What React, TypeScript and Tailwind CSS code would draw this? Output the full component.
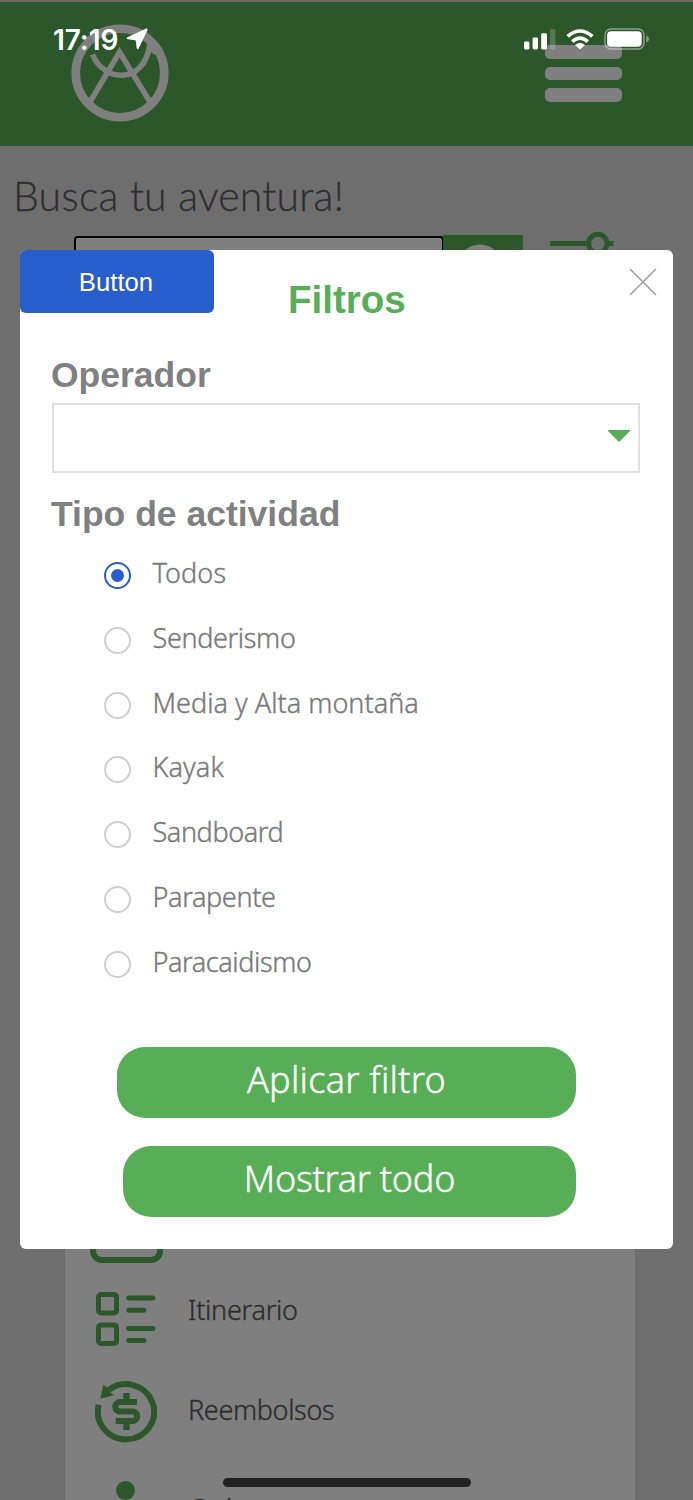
import { useState } from "react";

const ACTIVITIES = [
  { id: "todos", label: "Todos", tracking: "tracking-[0.1px]" },
  { id: "senderismo", label: "Senderismo", tracking: "tracking-[-0.35px]" },
  { id: "montana", label: "Media y Alta montaña", tracking: "tracking-[0.02px]" },
  { id: "kayak", label: "Kayak", tracking: "tracking-[0.1px]" },
  { id: "sandboard", label: "Sandboard", tracking: "tracking-[-0.4px]" },
  { id: "parapente", label: "Parapente", tracking: "tracking-[-0.35px]" },
  { id: "paracaidismo", label: "Paracaidismo", tracking: "tracking-[-0.4px]" },
];

function Logo() {
  return (
    <svg className="h-[98px] w-[98px]" viewBox="0 0 98 98" fill="none" stroke="currentColor">
      <circle cx="49" cy="49" r="44.3" strokeWidth="8.6" />
      <path d="M19 78 L48.5 28 L79 78" strokeWidth="5.5" />
      <path d="M21.5 30.5 C33 59 73 60 78.5 22 L85 29" strokeWidth="5.5" />
    </svg>
  );
}

function SearchIcon() {
  return (
    <svg className="h-[60px] w-[60px]" viewBox="0 0 60 60" fill="none" stroke="currentColor" strokeWidth="7">
      <circle cx="27" cy="25" r="18" />
      <path d="M40 38 L54 53" />
    </svg>
  );
}

function SlidersIcon() {
  return (
    <svg className="h-[60px] w-16" viewBox="0 0 64 60" fill="none" stroke="currentColor" strokeWidth="5">
      <path d="M0 12.5 H38 M57 12.5 H63.5" />
      <circle cx="47.8" cy="12.5" r="9.2" />
      <path d="M0 40 H8 M27 40 H63" />
      <circle cx="17" cy="40" r="9.2" />
    </svg>
  );
}

function ListIcon() {
  return (
    <svg className="h-[54px] w-[62px]" viewBox="0 0 62 54" fill="none" stroke="currentColor" strokeWidth="5">
      <rect x="3.5" y="2.5" width="18" height="18.5" rx="2.5" />
      <rect x="3.5" y="33" width="18" height="18.5" rx="2.5" />
      <path strokeLinecap="round" d="M33.7 6 H58 M33.7 18.2 H49 M33.7 36.5 H58 M33.7 48.6 H49" />
    </svg>
  );
}

function RefundIcon() {
  return (
    <svg className="h-[62px] w-[63px]" viewBox="0 0 63 62" fill="none" stroke="currentColor">
      <path d="M3.8 23.8 A28.1 27.6 0 1 0 14 8.8" strokeWidth="6" />
      <path d="M8.3 3.7 L5.3 17.7 L19 14.3 L15.8 11.5 L13 7Z" fill="currentColor" stroke="none" />
      <path d="M42 21 H25 A4.75 4.75 0 0 0 25 30.5 H37.5 A4.75 4.75 0 0 1 37.5 40 H20.7" strokeWidth="6" />
      <path d="M31.5 12 V21 M31.5 40 V49" strokeWidth="6.4" />
    </svg>
  );
}

function StatusBar() {
  return (
    <div className="absolute inset-x-0 top-0 flex h-[78px] items-center pl-[53px] pr-[44px] text-white">
      <span className="w-[73px] whitespace-nowrap pt-[2px] font-['Inter',sans-serif] text-[28px] font-semibold leading-none tracking-[-0.1px]">
        17:19
      </span>
      <svg className="h-[22px] w-[22px]" viewBox="0 0 22 22" fill="currentColor">
        <path d="M1.6 9.2 L19.6 .8 Q22 0 21.3 2.4 L12.8 20.2 Q11.4 22.3 10.6 19.8 L9.9 13.2 Q9.8 12.3 9 12.2 L2 11.3 Q-.5 10.6 1.6 9.2Z" />
      </svg>
      <svg className="ml-auto h-[21px] w-[32px]" viewBox="0 0 32 21" fill="currentColor">
        <rect x="0" y="12.5" width="5.4" height="8" rx="1.4" />
        <rect x="8.6" y="8.5" width="5.4" height="12" rx="1.4" />
        <rect x="17.2" y="4.3" width="5.8" height="16.2" rx="1.4" />
        <rect x="26" y="0" width="5.4" height="20.5" rx="1.4" opacity=".2" />
      </svg>
      <svg className="ml-[10px] h-[21px] w-[28px]" viewBox="0 0 28 21" fill="none" stroke="currentColor" strokeWidth="3.6">
        <path d="M1.7 7.4 Q14 -3.4 26.3 7.4" />
        <path d="M6.3 12.6 Q14 5.8 21.7 12.6" />
        <path d="M14 20.5 L9 16 Q14 12.2 19 16Z" fill="currentColor" stroke="none" />
      </svg>
      <svg className="ml-[10px] h-[22px] w-[45px]" viewBox="0 0 45 22" fill="none">
        <rect x="1" y="1" width="39" height="20" rx="6" stroke="white" strokeWidth="1.4" opacity=".45" />
        <rect x="3.1" y="3.2" width="34.6" height="15.6" rx="3.8" fill="white" />
        <path d="M42.4 7.5 Q45 8.6 45 11 T42.4 14.5Z" fill="white" opacity=".45" />
      </svg>
    </div>
  );
}

function HomePage() {
  return (
    <div className="flex h-full flex-col bg-[#dcdcdc] pt-[2px]">
      <header className="flex h-36 shrink-0 items-start justify-between bg-[#58ae56] pl-[71px] pr-[71px] pt-[22px] text-white">
        <Logo />
        <div className="mt-[21px] flex w-[77px] flex-col gap-2">
          <span className="h-[13.5px] rounded-[5px] bg-white" />
          <span className="h-[13.5px] rounded-[5px] bg-white" />
          <span className="h-[13.5px] rounded-[5px] bg-white" />
        </div>
      </header>
      <h1 className="mt-[24px] h-[51px] whitespace-nowrap pl-[13px] font-['Lato',sans-serif] text-[41px] font-light leading-[51px] tracking-[0.2px] text-[#5c5c5c] [-webkit-text-stroke:0.3px_#5c5c5c]">
        Busca tu aventura!
      </h1>
      <div className="mt-[14px] flex h-[68px] shrink-0 items-start pl-[74px]">
        <input className="mt-px h-16 w-[370px] rounded-[4px] border-2 border-black bg-white" />
        <button className="-ml-px flex h-[66px] w-20 justify-center bg-[#58ae56] pt-[6px] text-white">
          <SearchIcon />
        </button>
        <span className="-mt-[4px] ml-[27px] text-[#58ae56]">
          <SlidersIcon />
        </span>
      </div>
      <nav className="ml-[65px] mt-[860px] flex w-[570px] flex-col bg-white pl-[30px] font-['Noto_Sans',sans-serif] text-[27px] font-light text-[#585858] [-webkit-text-stroke:0.3px_#585858]">
        <div className="-ml-[5px] h-[100px] w-[73px] shrink-0 rounded-[12px] border-[6px] border-[#58ae56]" />
        <a className="mt-[29px] flex h-[58px] shrink-0 items-start whitespace-nowrap">
          <span className="text-[#58ae56]">
            <ListIcon />
          </span>
          <span className="ml-[31px] leading-[36px] tracking-[-0.25px]">Itinerario</span>
        </a>
        <a className="mt-[31px] flex h-[62px] shrink-0 items-start whitespace-nowrap">
          <span className="text-[#58ae56]">
            <RefundIcon />
          </span>
          <span className="ml-[30px] mt-[11px] leading-[36px] tracking-[-0.35px]">Reembolsos</span>
        </a>
        <a className="mt-[38px] flex h-[62px] shrink-0 items-start">
          <span className="ml-[21px] h-[19px] w-[19px] rounded-full bg-[#58ae56]" />
          <span className="ml-[53px] mt-[10px] leading-[36px]">Guías</span>
        </a>
      </nav>
    </div>
  );
}

function FilterDialog() {
  const [selected, setSelected] = useState("todos");

  return (
    <div className="relative flex h-[999px] w-[653px] flex-col rounded-[6px] bg-white font-['Liberation_Sans',Arial,sans-serif]">
      <div className="flex items-start">
        <button className="h-[63px] w-[194px] rounded-[6px] bg-[#285dcc] pr-[2px] pt-[2px] text-[25.7px] text-white">
          Button
        </button>
        <h2 className="ml-[74px] mt-[27px] text-[38.5px] font-bold leading-[46px] text-[#58ae56]">Filtros</h2>
        <button className="ml-auto mr-[16px] mt-[18px]" aria-label="Cerrar">
          <svg className="h-7 w-7" viewBox="0 0 28 28" stroke="#a0a0a0" strokeWidth="1.6">
            <path d="M1 1 L27 27 M27 1 L1 27" />
          </svg>
        </button>
      </div>

      <h3 className="ml-[31px] mt-[31px] whitespace-nowrap text-[35.5px] font-bold leading-[42px] text-[#808080]">
        Operador
      </h3>
      <button className="ml-[32px] mt-[7px] flex h-[70px] w-[588px] items-center justify-end border-2 border-[#e0e0e0] pr-[8px]">
        <svg className="-mt-[4px] h-3 w-[22px]" viewBox="0 0 22 12" fill="#58ae56">
          <path d="M0 0 H22 V1 L11 12 L0 1Z" />
        </svg>
      </button>
      <h3 className="ml-[31px] mt-[20px] whitespace-nowrap text-[35.5px] font-bold leading-[42px] text-[#808080]">
        Tipo de actividad
      </h3>

      <div className="ml-[84px] mt-[22px] flex flex-col">
        {ACTIVITIES.map((activity) => (
          <label key={activity.id} className="flex h-[64.8px] items-start">
            <input
              type="radio"
              name="actividad"
              className="sr-only"
              checked={selected === activity.id}
              onChange={() => setSelected(activity.id)}
            />
            <span
              className={`mt-[5px] flex h-[27px] w-[27px] items-center justify-center rounded-full border-2 ${
                selected === activity.id ? "border-[#285dcc]" : "border-[#cecece]"
              }`}
            >
              {selected === activity.id && <span className="h-[13px] w-[13px] rounded-full bg-[#285dcc]" />}
            </span>
            <span
              className={`ml-[21.5px] whitespace-nowrap font-['Noto_Sans',sans-serif] text-[27px] font-light leading-[32px] text-[#7a7a7a] [-webkit-text-stroke:0.4px_#7a7a7a] ${activity.tracking}`}
            >
              {activity.label}
            </span>
          </label>
        ))}
      </div>

      <button className="ml-[97px] mt-[36px] h-[71px] w-[459px] shrink-0 rounded-[28px] bg-[#58ae56] pb-[5px] font-['Noto_Sans',sans-serif] text-[36px] font-light leading-none tracking-[0.3px] text-white [-webkit-text-stroke:0.4px_white]">
        Aplicar filtro
      </button>
      <button className="ml-[103px] mt-[28px] h-[71px] w-[453px] shrink-0 rounded-[28px] bg-[#58ae56] pb-[5px] font-['Noto_Sans',sans-serif] text-[36px] font-light leading-none tracking-[-0.25px] text-white [-webkit-text-stroke:0.4px_white]">
        Mostrar todo
      </button>
    </div>
  );
}

export default function App() {
  return (
    <div className="relative h-[1500px] w-[693px] overflow-hidden">
      <HomePage />
      <div className="absolute inset-0 bg-black/50 pl-[20px] pt-[250px]">
        <FilterDialog />
      </div>
      <StatusBar />
      <div className="absolute bottom-[13px] left-[223px] h-[9px] w-[248px] rounded-full bg-[#222]" />
    </div>
  );
}
